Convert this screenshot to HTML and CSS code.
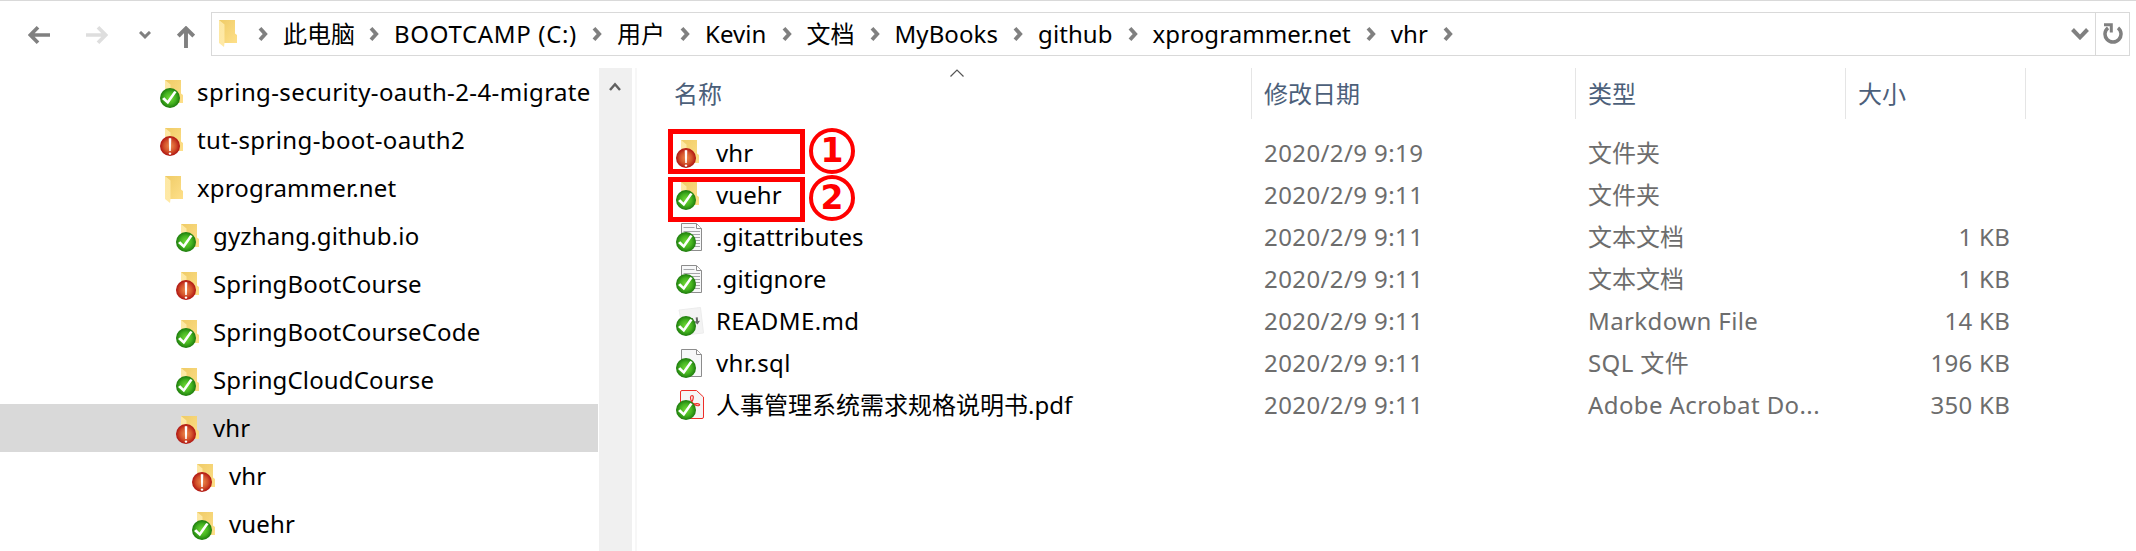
FILE: index.html
```html
<!DOCTYPE html>
<html lang="zh-CN">
<head>
<meta charset="utf-8">
<title>vhr</title>
<link rel="stylesheet" href="styles.css">
</head>
<body>
<svg class="defs" aria-hidden="true">
  <defs>
    <linearGradient id="gold" x1="0" y1="0" x2="1" y2="1"><stop offset="0" stop-color="#efcb66"/><stop offset="1" stop-color="#fee08a"/></linearGradient>
    <linearGradient id="flap" x1="0" y1="0" x2="0" y2="1"><stop offset="0" stop-color="#fde8a4"/><stop offset="1" stop-color="#ffe9a6"/></linearGradient>
    <radialGradient id="green" cx=".5" cy=".5" r=".5"><stop offset="0" stop-color="#74dc38"/><stop offset=".6" stop-color="#43b11f"/><stop offset="1" stop-color="#1c7a0c"/></radialGradient>
    <radialGradient id="red" cx=".5" cy=".5" r=".5"><stop offset="0" stop-color="#ef8f4e"/><stop offset=".6" stop-color="#d2502a"/><stop offset="1" stop-color="#ae1210"/></radialGradient>
    <symbol id="folder" viewBox="0 0 28 30"><path d="M5 1H21V14.500L23 16V24H10L5 20Z" fill="url(#gold)"/><path d="M5 1L10.500 5.500V24L10 28L5 24Z" fill="url(#flap)"/></symbol>
    <symbol id="ok" viewBox="0 0 28 30"><circle cx="10" cy="19" r="10" fill="url(#green)"/><path d="M2 20L4.300 18.300L7.500 21.600L14.200 12L16.600 13L8 25.300Z" fill="#fff"/></symbol>
    <symbol id="warn" viewBox="0 0 28 30"><circle cx="10" cy="19" r="10" fill="url(#red)"/><path d="M8.700 11.500Q10 10.500 11.300 11.500L10.800 24H9.200Z" fill="#fff"/><circle cx="10" cy="26.600" r="1.200" fill="#fff"/></symbol>
    <symbol id="page" viewBox="0 0 28 30"><path d="M5.500 .5H20.500L25.500 5.500V27.500H5.500Z" fill="#f7f8f9" stroke="#8c8c8c"/><path d="M20.500 1V5.500H25.500" fill="#fff" stroke="#8c8c8c"/></symbol>
    <symbol id="lines" viewBox="0 0 28 30"><path d="M7.500 4.500H18.500M7.500 8.500H24M7.500 11.500H24M7.500 14.500H24M7.500 17.500H24M7.500 20.500H24M7.500 23.500H24" stroke="#a4a6a8" fill="none"/></symbol>
    <symbol id="md" viewBox="0 0 28 30"><path d="M3 3L24.500 .5L27.500 26L8 28Z" fill="#f3f3f3" stroke="#ececec"/><path d="M19.700 10.500L21.700 10.300L22.100 14L24 13.800L21.500 17.500L18.300 14.400L20.100 14.200ZM8 17L8.500 12L11.500 14L14 11.500L17 11L17.500 17Z" fill="#666"/></symbol>
    <symbol id="pdf" viewBox="0 0 28 30" overflow="visible"><path d="M4.500 1Q4.500 -.5 6 -.5H20.500L27.500 6V26Q27.500 27.500 26 27.500H6Q4.500 27.500 4.500 26Z" fill="#f5f5f5" stroke="#ee2d27"/><path d="M15.800 11C14 8 14 4.500 16 4.500C18 4.500 17.500 8 15.800 11C14 14 10 14.500 9.500 18M15.800 11C18 14 20 15 22.500 14.700C25 14 23 12.300 20 12.700C17 13 14 13.800 12 14.800" fill="none" stroke="#ee2d27" stroke-width="1.200"/></symbol>
    <symbol id="chev" viewBox="0 0 10 14"><path d="M2 1.300L7.200 7L2 12.700" fill="none" stroke="#808080" stroke-width="3.800"/></symbol>
  </defs>
</svg>

<header class="toolbar">
  <nav class="nav">
    <svg class="back" viewBox="0 0 22 18"><path d="M22 9H3M10 1.300L2.400 9L10 16.700" fill="none" stroke="#808080" stroke-width="3.700"/></svg>
    <svg class="forward" viewBox="0 0 22 18"><path d="M0 9H19M12 1.300L19.600 9L12 16.700" fill="none" stroke="#dedede" stroke-width="3.700"/></svg>
    <svg class="recent" viewBox="0 0 12 8"><path d="M1 1L6 5.800L11 1" fill="none" stroke="#808080" stroke-width="3"/></svg>
    <svg class="up" viewBox="0 0 18 22"><path d="M9 22V3M1.300 10L9 2.400L16.700 10" fill="none" stroke="#808080" stroke-width="3.900"/></svg>
  </nav>
  <div class="address">
    <div class="crumbs">
      <svg class="icon"><use href="#folder"/></svg>
      <svg class="chev"><use href="#chev"/></svg><span class="crumb root">此电脑</span>
      <svg class="chev"><use href="#chev"/></svg><span class="crumb drive">BOOTCAMP (C:)</span>
      <svg class="chev"><use href="#chev"/></svg><span class="crumb cjk">用户</span>
      <svg class="chev"><use href="#chev"/></svg><span class="crumb">Kevin</span>
      <svg class="chev"><use href="#chev"/></svg><span class="crumb cjk">文档</span>
      <svg class="chev"><use href="#chev"/></svg><span class="crumb">MyBooks</span>
      <svg class="chev"><use href="#chev"/></svg><span class="crumb">github</span>
      <svg class="chev"><use href="#chev"/></svg><span class="crumb">xprogrammer.net</span>
      <svg class="chev"><use href="#chev"/></svg><span class="crumb">vhr</span>
      <svg class="chev"><use href="#chev"/></svg>
    </div>
    <svg class="drop" viewBox="0 0 18 12"><path d="M1.500 1.500L9 9.300L16.500 1.500" fill="none" stroke="#808080" stroke-width="4"/></svg>
    <div class="refresh"><svg viewBox="0 0 20 22"><path d="M15 4.800A8 8 0 1 1 5 4.800" fill="none" stroke="#808080" stroke-width="3.500"/><path d="M1 1.800H8.300V9.500" fill="none" stroke="#808080" stroke-width="3"/></svg></div>
  </div>
</header>

<main class="body">
  <aside class="tree">
    <div class="node l1"><svg class="icon"><use href="#folder"/><use href="#ok"/></svg><span class="wide">spring-security-oauth-2-4-migrate</span></div>
    <div class="node l1"><svg class="icon"><use href="#folder"/><use href="#warn"/></svg><span class="wide">tut-spring-boot-oauth2</span></div>
    <div class="node l1"><svg class="icon"><use href="#folder"/></svg><span>xprogrammer.net</span></div>
    <div class="node l2"><svg class="icon"><use href="#folder"/><use href="#ok"/></svg><span>gyzhang.github.io</span></div>
    <div class="node l2"><svg class="icon"><use href="#folder"/><use href="#warn"/></svg><span>SpringBootCourse</span></div>
    <div class="node l2"><svg class="icon"><use href="#folder"/><use href="#ok"/></svg><span>SpringBootCourseCode</span></div>
    <div class="node l2"><svg class="icon"><use href="#folder"/><use href="#ok"/></svg><span>SpringCloudCourse</span></div>
    <div class="node l2 selected"><svg class="icon"><use href="#folder"/><use href="#warn"/></svg><span>vhr</span></div>
    <div class="node l3"><svg class="icon"><use href="#folder"/><use href="#warn"/></svg><span>vhr</span></div>
    <div class="node l3"><svg class="icon"><use href="#folder"/><use href="#ok"/></svg><span>vuehr</span></div>
  </aside>
  <div class="scrollbar"><svg viewBox="0 0 12 9"><path d="M1 8L6 2.300L11 8" fill="none" stroke="#606060" stroke-width="2.500"/></svg></div>
  <div class="splitter"></div>
  <section class="files">
    <div class="head">
      <div class="col name">名称<svg class="sort" viewBox="0 0 14 8"><path d="M.5 7.500L7 1L13.500 7.500" fill="none" stroke="#555" stroke-width="1.200"/></svg></div>
      <div class="col">修改日期</div><div class="col">类型</div><div class="col">大小</div>
    </div>
    <div class="row"><div class="file"><svg class="icon"><use href="#folder"/><use href="#warn"/></svg><span>vhr</span></div><span class="date">2020/2/9 9:19</span><span>文件夹</span><span class="size"></span><div class="mark">1</div></div>
    <div class="row"><div class="file"><svg class="icon"><use href="#folder"/><use href="#ok"/></svg><span>vuehr</span></div><span class="date">2020/2/9 9:11</span><span>文件夹</span><span class="size"></span><div class="mark second">2</div></div>
    <div class="row"><div class="file"><svg class="icon"><use href="#page"/><use href="#lines"/><use href="#ok"/></svg><span>.gitattributes</span></div><span class="date">2020/2/9 9:11</span><span>文本文档</span><span class="size">1 KB</span></div>
    <div class="row"><div class="file"><svg class="icon"><use href="#page"/><use href="#lines"/><use href="#ok"/></svg><span>.gitignore</span></div><span class="date">2020/2/9 9:11</span><span>文本文档</span><span class="size">1 KB</span></div>
    <div class="row"><div class="file"><svg class="icon"><use href="#md"/><use href="#ok"/></svg><span class="wide">README.md</span></div><span class="date">2020/2/9 9:11</span><span class="type">Markdown File</span><span class="size">14 KB</span></div>
    <div class="row"><div class="file"><svg class="icon"><use href="#page"/><use href="#ok"/></svg><span class="wide">vhr.sql</span></div><span class="date">2020/2/9 9:11</span><span class="type">SQL 文件</span><span class="size">196 KB</span></div>
    <div class="row"><div class="file"><svg class="icon"><use href="#pdf"/><use href="#ok"/></svg><span class="cjk">人事管理系统需求规格说明书.pdf</span></div><span class="date">2020/2/9 9:11</span><span class="type">Adobe Acrobat Do...</span><span class="size">350 KB</span></div>
  </section>
</main>
</body>
</html>
```
FILE: styles.css
```css
*, *::before { box-sizing: border-box; }
body {
  margin: 0;
  width: 2136px;
  height: 551px;
  overflow: hidden;
  background: #fff;
  color: #000;
  font: 24px/32px "Noto Sans", "Noto Sans CJK SC", sans-serif;
  white-space: nowrap;
}
svg { display: block; flex: none; }
.defs { position: absolute; width: 0; height: 0; }
.icon { width: 28px; height: 30px; overflow: visible; }
.toolbar {
  display: flex;
  height: 68px;
  padding-top: 11px;
  border-top: 1px solid #d9d9d9;
}
.nav { display: flex; align-items: center; width: 211px; height: 46px; padding-left: 28px; }
.back { width: 22px; height: 18px; }
.forward { width: 22px; height: 18px; margin-left: 36px; }
.recent { width: 12px; height: 8px; margin-left: 31px; }
.up { width: 18px; height: 22px; margin: 4px 0 0 26px; }
.address { display: flex; align-items: center; width: 1919px; height: 44px; border: 1px solid #d9d9d9; }
.crumbs { display: flex; align-items: center; flex: 1; padding-left: 2px; letter-spacing: .08px; }
.crumbs .icon { margin-right: 16px; }
.chev { width: 10px; height: 14px; }
.crumb { margin: 0 15px; }
.root { margin-right: 14px; letter-spacing: 0; }
.drive { letter-spacing: .67px; }
.drop { width: 18px; height: 12px; margin-right: 6px; }
.refresh { display: flex; align-items: center; justify-content: center; width: 34px; height: 42px; border-left: 1px solid #d9d9d9; }
.refresh svg { width: 20px; height: 22px; }
.body { display: flex; height: 483px; }
.tree { flex: none; width: 598px; }
.node { display: flex; align-items: center; height: 48px; letter-spacing: .15px; }
.node .icon { margin-top: 4px; }
.node span { margin: -1px 0 0 9px; }
.node .wide { letter-spacing: .38px; }
.l1 { padding-left: 160px; }
.l2 { padding-left: 176px; }
.l3 { padding-left: 192px; }
.selected { background: #d9d9d9; }
.scrollbar { flex: none; width: 33px; margin-left: 1px; background: #f0f0f0; }
.scrollbar svg { width: 12px; height: 9px; margin: 14px 0 0 10px; }
.splitter { flex: none; width: 2px; margin-left: 3px; background: #f7f7f7; }
.files { flex: 1; padding-left: 15px; }
.head { display: grid; grid-template-columns: 600px 324px 270px 180px; height: 51px; margin-bottom: 13px; color: #4c607a; }
.col { padding: 10px 0 0 12px; border-right: 1px solid #e5e5e5; }
.name { position: relative; padding-left: 22px; }
.sort { position: absolute; left: 298px; top: 1px; width: 14px; height: 8px; }
.row {
  position: relative;
  display: grid;
  grid-template-columns: 612px 324px 270px 152px;
  align-items: center;
  height: 42px;
  color: #6d6d6d;
}
.row > span { margin-top: -1px; }
.file { display: flex; align-items: center; padding-left: 24px; color: #000; letter-spacing: .1px; }
.file .icon { margin-top: 2px; }
.file span { margin: -1px 0 0 12px; }
.file .wide, .date, .type { letter-spacing: .4px; }
.cjk, .file .cjk { letter-spacing: 0; }
.size { text-align: right; letter-spacing: .25px; }
.mark {
  position: absolute;
  left: 157px;
  top: -4px;
  width: 46px;
  height: 46px;
  border: 4px solid #f00;
  border-radius: 50%;
  color: #f00;
  font: bold 33px/38px "DejaVu Sans", sans-serif;
  text-align: center;
}
.mark::before { content: ""; position: absolute; left: -145px; top: -3px; width: 137px; height: 45px; border: 5px solid #f00; }
.second { top: 1px; }
.second::before { top: -2px; }
```
